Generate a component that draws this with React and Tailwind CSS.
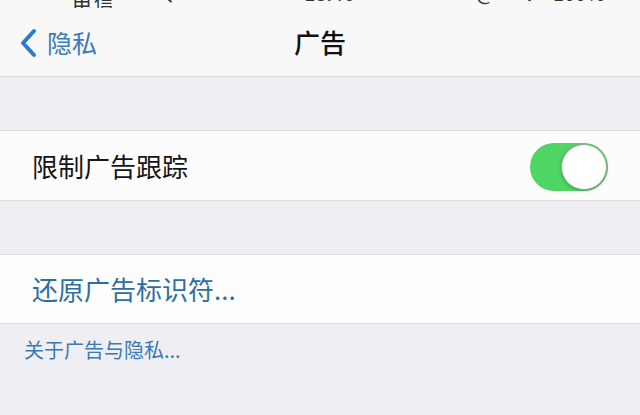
export default function App() {
  const font = { fontFamily: '"Noto Sans CJK SC", "Noto Sans", sans-serif' };

  return (
    <div className="w-[640px] h-[415px] overflow-hidden bg-[#efeff3] flex flex-col" style={font}>
      {/* Nav bar with clipped status bar */}
      <div className="bg-[#f8f8f8] border-b border-[#d6d6da] flex flex-col">
        <div className="h-[8px] overflow-hidden">
          <div className="-mt-[19px] h-[24px] flex items-center text-[20px] text-[#333] leading-none">
            <span className="ml-[72px] w-[68px] tracking-[2px]">中国电信</span>
            <span className="ml-[24px]">令</span>
            <span className="ml-[126px]">13:46</span>
            <span className="ml-[122px]">@</span>
            <span className="ml-[30px]">✓</span>
            <span className="ml-[14px]">100%</span>
            <div className="ml-[6px] w-[32px] h-[14px] bg-[#5fd068] rounded-[2px]" />
          </div>
        </div>
        <div className="h-[68px] flex items-center relative">
          <div className="flex items-center pl-[19px] gap-[10px] text-[#3c7cb8]">
            <svg width="18" height="30" viewBox="0 0 18 30" className="mt-[1px]">
              <path d="M15 3 L4 15 L15 27" fill="none" stroke="#2a7ad0" strokeWidth="4" strokeLinecap="round" strokeLinejoin="round" />
            </svg>
            <span className="text-[25px] leading-none">隐私</span>
          </div>
          <div className="absolute inset-x-0 text-center text-[26px] font-medium text-[#111] leading-none pointer-events-none">
            广告
          </div>
        </div>
      </div>

      <div className="h-[53px]" />

      {/* Limit ad tracking */}
      <div className="h-[71px] bg-[#fdfcfd] border-y border-[#dcdce0] flex items-center justify-between pl-[32px] pr-[32px]">
        <span className="text-[26px] text-[#151515] leading-none">限制广告跟踪</span>
        <div className="w-[78px] h-[48px] rounded-full bg-[#4fd563] flex items-center justify-end p-[1px] mt-[2px]">
          <div className="w-[46px] h-[46px] rounded-full bg-white border border-[#9aa39b] shadow-[0_1px_3px_rgba(0,0,0,0.25)]" />
        </div>
      </div>

      <div className="h-[53px]" />

      {/* Reset identifier */}
      <div className="h-[70px] bg-[#fdfdfe] border-y border-[#dcdce0] flex items-center pl-[32px]">
        <span className="text-[26px] text-[#2f6f9f] leading-none">还原广告标识符...</span>
      </div>

      <div className="pl-[24px] pt-[16px] text-[20px] text-[#3a79b4] leading-none">
        关于广告与隐私...
      </div>
    </div>
  );
}
